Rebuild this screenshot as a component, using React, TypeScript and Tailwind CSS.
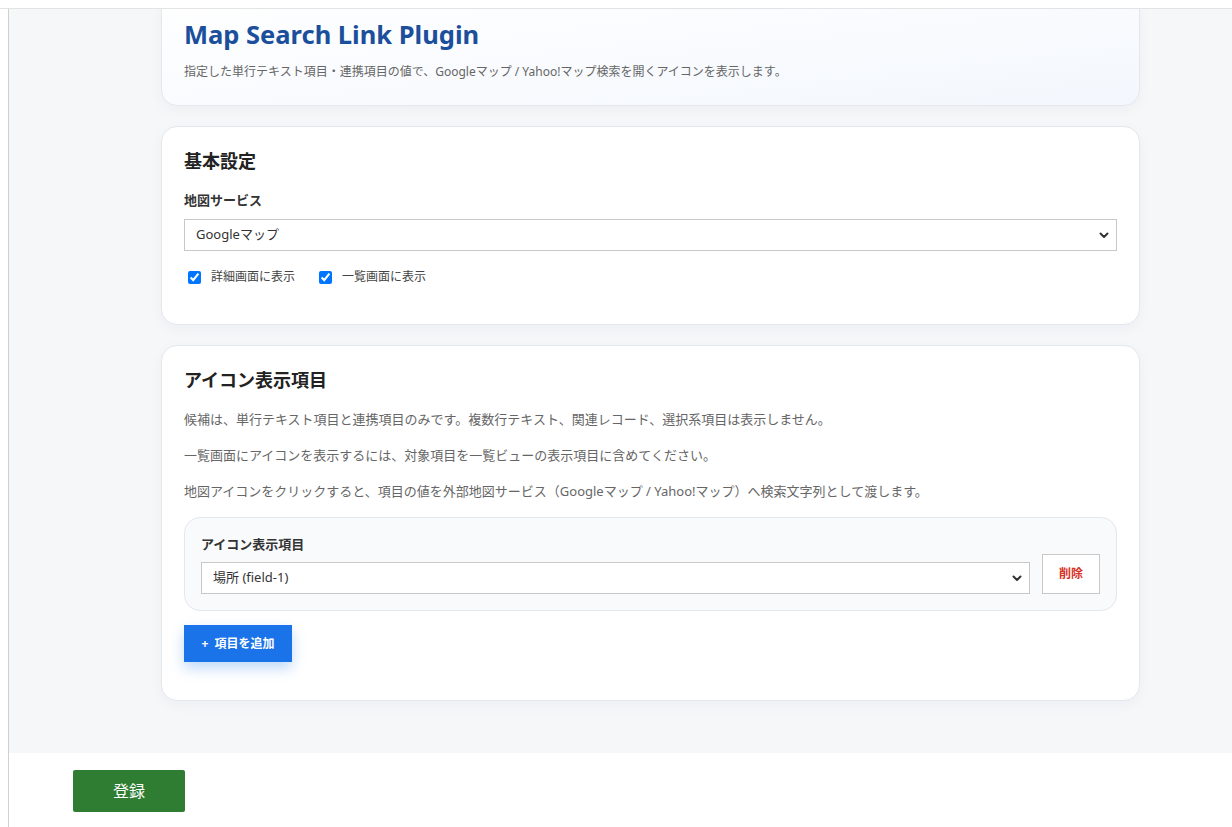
import React, { useState } from 'react';

const FONT = "font-['Noto_Sans','Noto_Sans_CJK_JP',sans-serif]";

function Chevron() {
  return (
    <svg className="pointer-events-none absolute right-[8px] top-1/2 -translate-y-1/2" width="10" height="10" viewBox="0 0 10 10">
      <path d="M1.5 3.5 L5 7 L8.5 3.5" fill="none" stroke="#333" strokeWidth="2" strokeLinecap="round" strokeLinejoin="round" />
    </svg>
  );
}

function Select({ value, options, onChange }: { value: string; options: string[]; onChange: (v: string) => void }) {
  return (
    <div className="relative w-full">
      <select
        value={value}
        onChange={e => onChange(e.target.value)}
        className="block h-[32px] w-full appearance-none border border-[#c8c8c8] bg-white pl-[11px] pr-8 text-[13px] text-[#333] outline-none"
      >
        {options.map(o => (
          <option key={o} value={o}>{o}</option>
        ))}
      </select>
      <Chevron />
    </div>
  );
}

export default function App() {
  const [service, setService] = useState('Googleマップ');
  const [showDetail, setShowDetail] = useState(true);
  const [showList, setShowList] = useState(true);
  const [fields, setFields] = useState<string[]>(['場所 (field-1)']);

  return (
    <div className={`flex h-[827px] flex-col overflow-hidden bg-white ${FONT}`}>
      {/* top bar */}
      <div className="h-[9px] shrink-0 border-b border-[#e3e3e3] bg-white shadow-[0_1px_2px_rgba(0,0,0,0.04)]" />

      <div className="flex flex-1">
        <div className="w-[8px] bg-white" />
        <div className="w-px bg-[#d0d0d0]" />

        <div className="flex flex-1 flex-col">
          {/* settings area */}
          <div className="h-[744px] shrink-0 overflow-hidden bg-[#f6f7f9] pl-[152px]">
            <div className="flex w-[979px] flex-col gap-5">
              {/* header card */}
              <div className="-mt-[16px] rounded-2xl border border-[#e4e7ec] bg-gradient-to-br from-white to-[#f3f7fd] px-[22px] pb-6 pt-6 shadow-[0_4px_14px_rgba(15,23,42,0.04)]">
                <h1 className="text-[25.5px] font-bold leading-[32px] text-[#1b4f9c]">Map Search Link Plugin</h1>
                <p className="mt-[13px] text-[12px] leading-[18px] text-[#666]">
                  指定した単行テキスト項目・連携項目の値で、Googleマップ / Yahoo!マップ検索を開くアイコンを表示します。
                </p>
              </div>

              {/* basic settings */}
              <div className="rounded-2xl border border-[#e4e7ec] bg-white px-[22px] pb-[38px] pt-6 shadow-[0_4px_14px_rgba(15,23,42,0.04)]">
                <h2 className="text-[18px] font-bold leading-[20px] text-[#222]">基本設定</h2>
                <div className="mt-5 text-[13px] font-bold leading-[18px] text-[#333]">地図サービス</div>
                <div className="mt-[10px]">
                  <Select value={service} options={['Googleマップ', 'Yahoo!マップ']} onChange={setService} />
                </div>
                <div className="mt-[17px] flex h-[18px] items-center gap-[24px] text-[12px] text-[#444]">
                  <label className="flex items-center gap-[10px] pl-[4px]">
                    <input
                      type="checkbox"
                      checked={showDetail}
                      onChange={e => setShowDetail(e.target.checked)}
                      className="m-0 h-[13px] w-[13px] accent-[#0075ff]"
                    />
                    詳細画面に表示
                  </label>
                  <label className="flex items-center gap-[10px]">
                    <input
                      type="checkbox"
                      checked={showList}
                      onChange={e => setShowList(e.target.checked)}
                      className="m-0 h-[13px] w-[13px] accent-[#0075ff]"
                    />
                    一覧画面に表示
                  </label>
                </div>
              </div>

              {/* icon fields */}
              <div className="rounded-2xl border border-[#e4e7ec] bg-white px-[22px] pb-[38px] pt-6 shadow-[0_4px_14px_rgba(15,23,42,0.04)]">
                <h2 className="text-[18px] font-bold leading-[20px] text-[#222]">アイコン表示項目</h2>
                <div className="mt-[19px] flex flex-col gap-4 text-[13px] leading-[20px] text-[#666]">
                  <p>候補は、単行テキスト項目と連携項目のみです。複数行テキスト、関連レコード、選択系項目は表示しません。</p>
                  <p>一覧画面にアイコンを表示するには、対象項目を一覧ビューの表示項目に含めてください。</p>
                  <p>地図アイコンをクリックすると、項目の値を外部地図サービス（Googleマップ / Yahoo!マップ）へ検索文字列として渡します。</p>
                </div>

                <div className="mt-4 flex flex-col gap-3">
                  {fields.map((f, i) => (
                    <div key={i} className="flex items-end gap-3 rounded-2xl border border-[#e4e7ec] bg-[#f9fafc] px-4 pb-4 pt-[17px]">
                      <div className="flex-1">
                        <div className="mb-[9px] text-[13px] font-bold leading-[18px] text-[#333]">アイコン表示項目</div>
                        <Select
                          value={f}
                          options={['場所 (field-1)', '住所 (field-2)']}
                          onChange={v => setFields(prev => prev.map((p, j) => (j === i ? v : p)))}
                        />
                      </div>
                      <button
                        onClick={() => setFields(prev => prev.filter((_, j) => j !== i))}
                        className="h-[40px] w-[58px] border border-[#c8c8c8] bg-white text-[12px] font-bold text-[#d93025]"
                      >
                        削除
                      </button>
                    </div>
                  ))}
                </div>

                <button
                  onClick={() => setFields(prev => [...prev, '場所 (field-1)'])}
                  className="mt-[14px] h-[37px] w-[108px] bg-[#1a73e8] text-[12px] font-bold text-white shadow-[0_6px_14px_rgba(26,115,232,0.28)]"
                >
                  +&nbsp; 項目を追加
                </button>
              </div>
            </div>
          </div>

          {/* footer */}
          <div className="flex-1 bg-white pl-[64px] pt-[17px]">
            <button className="h-[42px] w-[112px] rounded-[2px] bg-[#2e7d32] text-[16px] text-white">登録</button>
          </div>
        </div>
      </div>
    </div>
  );
}
